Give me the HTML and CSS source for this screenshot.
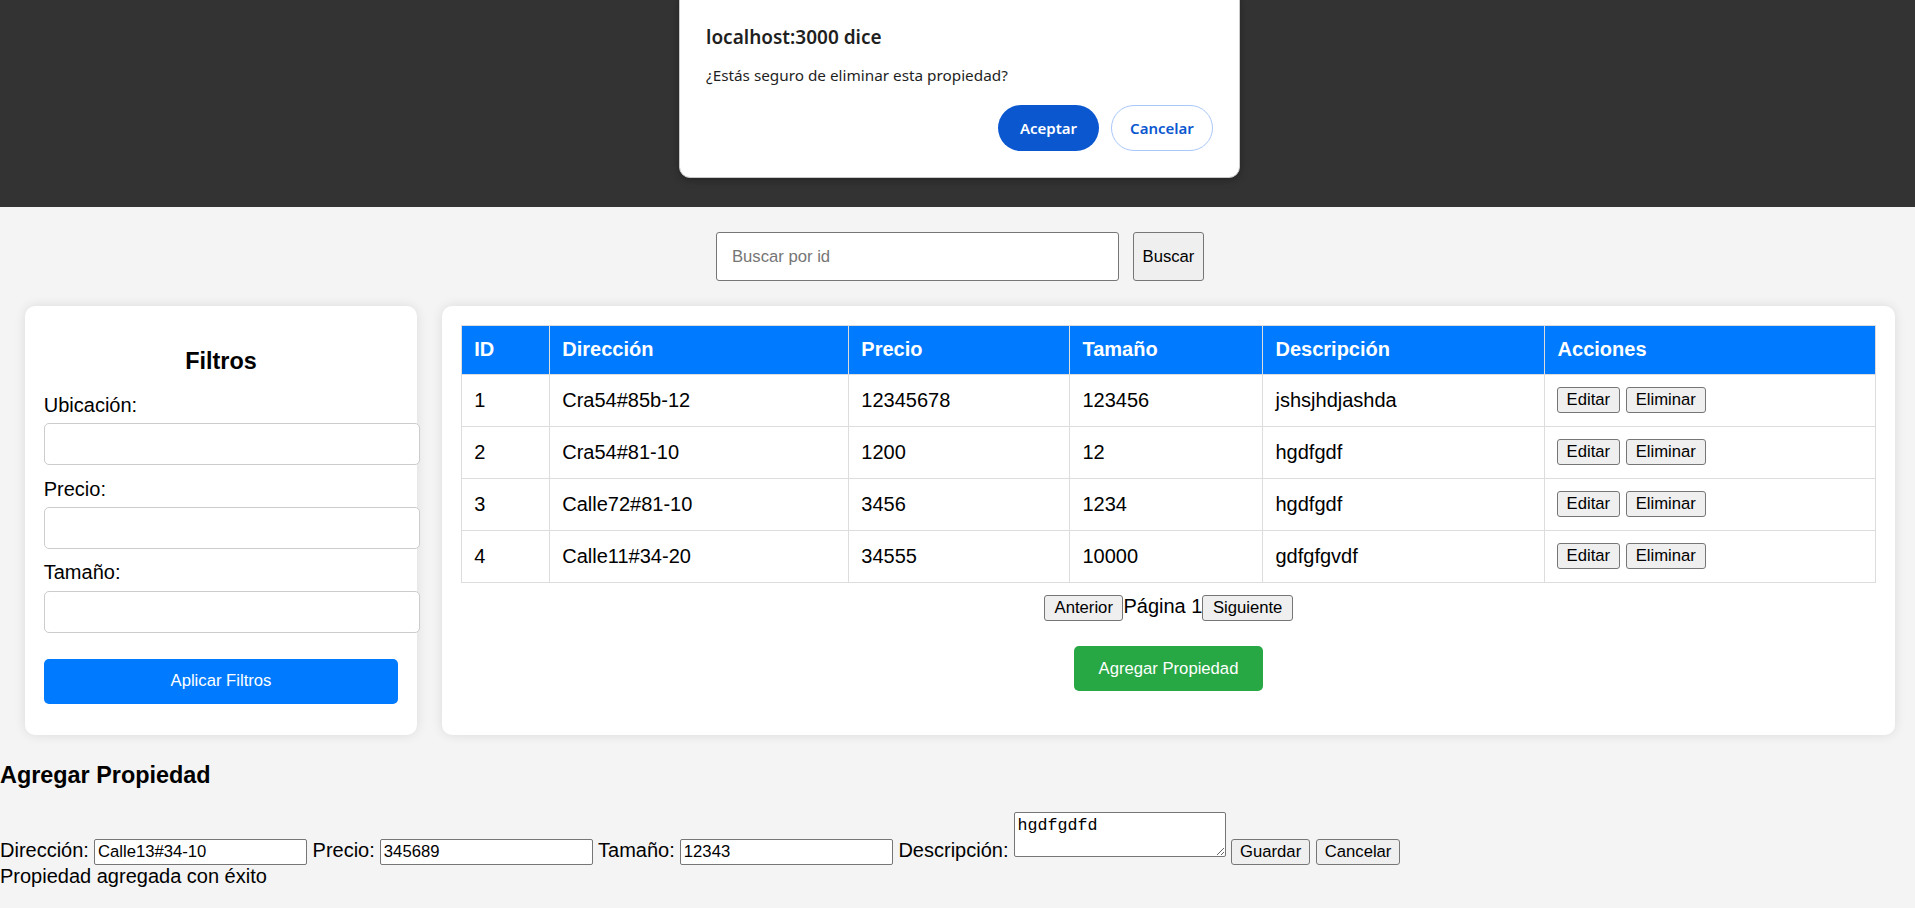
FILE: index.html
```html
<!DOCTYPE html>
<html lang="es">
<head>
<meta charset="utf-8">
<title>Propiedades</title>
<link rel="stylesheet" href="styles.css">
</head>
<body>
<header class="topbar"></header>

<div class="search">
  <input class="search-input" type="text" placeholder="Buscar por id">
  <button class="btn-native search-btn">Buscar</button>
</div>

<div class="main">
  <aside class="card filters">
    <h3 class="filters-title">Filtros</h3>
    <label class="f-label">Ubicación:</label>
    <input class="f-input" type="text">
    <label class="f-label">Precio:</label>
    <input class="f-input" type="text">
    <label class="f-label">Tamaño:</label>
    <input class="f-input" type="text">
    <button class="apply-btn">Aplicar Filtros</button>
  </aside>

  <section class="card table-card">
    <table class="props">
      <colgroup>
        <col class="c-id"><col class="c-dir"><col class="c-precio"><col class="c-tam"><col class="c-desc"><col class="c-acc">
      </colgroup>
      <thead>
        <tr><th>ID</th><th>Dirección</th><th>Precio</th><th>Tamaño</th><th>Descripción</th><th>Acciones</th></tr>
      </thead>
      <tbody>
        <tr><td>1</td><td>Cra54#85b-12</td><td>12345678</td><td>123456</td><td>jshsjhdjashda</td><td><button class="btn-native">Editar</button> <button class="btn-native">Eliminar</button></td></tr>
        <tr><td>2</td><td>Cra54#81-10</td><td>1200</td><td>12</td><td>hgdfgdf</td><td><button class="btn-native">Editar</button> <button class="btn-native">Eliminar</button></td></tr>
        <tr><td>3</td><td>Calle72#81-10</td><td>3456</td><td>1234</td><td>hgdfgdf</td><td><button class="btn-native">Editar</button> <button class="btn-native">Eliminar</button></td></tr>
        <tr><td>4</td><td>Calle11#34-20</td><td>34555</td><td>10000</td><td>gdfgfgvdf</td><td><button class="btn-native">Editar</button> <button class="btn-native">Eliminar</button></td></tr>
      </tbody>
    </table>
    <div class="pager"><button class="btn-native">Anterior</button><span>Página 1</span><button class="btn-native">Siguiente</button></div>
    <button class="add-btn">Agregar Propiedad</button>
  </section>
</div>

<section class="add-form">
  <h3 class="add-title">Agregar Propiedad</h3>
  <form class="form-line"><label>Dirección:</label> <input class="line-input" type="text" value="Calle13#34-10"> <label>Precio:</label> <input class="line-input" type="text" value="345689"> <label>Tamaño:</label> <input class="line-input" type="text" value="12343"> <label>Descripción:</label> <textarea class="line-area">hgdfgdfd</textarea> <button type="button" class="btn-native btn-form">Guardar</button> <button type="button" class="btn-native btn-form">Cancelar</button></form>
  <div class="msg">Propiedad agregada con éxito</div>
</section>

<div class="dialog">
  <div class="dialog-title">localhost:3000 dice</div>
  <div class="dialog-msg">¿Estás seguro de eliminar esta propiedad?</div>
  <div class="dialog-actions">
    <button class="dlg-btn dlg-ok">Aceptar</button>
    <button class="dlg-btn dlg-cancel">Cancelar</button>
  </div>
</div>
</body>
</html>
```

FILE: styles.css
```css
body {
  margin: 0;
  background: #f4f4f4;
  font-family: "Liberation Sans", Arial, sans-serif;
  font-size: 20px;
  color: #000;
}

.topbar {
  height: 207px;
  background: #333333;
}

.btn-native {
  font-family: "Liberation Sans", Arial, sans-serif;
  font-size: 16.67px;
  color: #000;
  background: #efefef;
  border: 1px solid #767676;
  border-radius: 3px;
  padding: 2px 9px;
  margin: 0;
}
.btn-form {
  padding: 2px 8px;
}

/* search */
.search {
  display: flex;
  justify-content: center;
  gap: 14px;
  margin-top: 25px;
  padding-left: 5px;
}
.search-input {
  width: 403px;
  height: 49px;
  box-sizing: border-box;
  padding: 0 15px;
  border: 1px solid #767676;
  border-radius: 3px;
  font-family: "Liberation Sans", Arial, sans-serif;
  font-size: 16.67px;
  background: #fff;
}
.search-input::placeholder { color: #757575; }
.search-btn {
  width: 71px;
  padding: 0;
}

/* main */
.main {
  display: flex;
  gap: 25px;
  padding: 25px 20px 0 25px;
  align-items: stretch;
}
.card {
  background: #fff;
  border-radius: 10px;
  box-shadow: 0 0 12px rgba(0, 0, 0, 0.1);
  padding: 18.75px;
  box-sizing: border-box;
}
.filters {
  width: 392px;
  flex: none;
}
.table-card {
  flex: 1;
  min-width: 0;
}

.filters-title {
  font-size: 23.4px;
  text-align: center;
  margin: 23.4px 0 18.75px;
}
.f-label {
  display: block;
  margin-bottom: 6.25px;
}
.f-input {
  display: block;
  width: 100%;
  padding: 10px;
  border: 1px solid #ccc;
  border-radius: 5px;
  margin: 0 0 12.5px;
  font-family: "Liberation Sans", Arial, sans-serif;
  font-size: 16.67px;
  background: #fff;
}
.apply-btn {
  display: block;
  width: 100%;
  margin-top: 26px;
  padding: 12.5px;
  background: #007bff;
  color: #fff;
  border: none;
  border-radius: 5px;
  font-family: "Liberation Sans", Arial, sans-serif;
  font-size: 16.67px;
}

/* table */
.props {
  width: 100%;
  border-collapse: collapse;
  table-layout: fixed;
}
.props th,
.props td {
  border: 1px solid #ddd;
  padding: 12.5px;
  text-align: left;
}
.props td:last-child {
  padding-left: 11.5px;
}
.props th {
  background: #007bff;
  color: #fff;
  font-weight: bold;
}
.c-id { width: 88px; }
.c-dir { width: 299px; }
.c-precio { width: 221px; }
.c-tam { width: 193px; }
.c-desc { width: 282px; }
.c-acc { width: 331px; }

.pager {
  text-align: center;
  margin-top: 12.5px;
}
.pager .btn-native {
  padding: 2px 9.5px;
}
.add-btn {
  display: block;
  margin: 25px auto;
  padding: 12.5px 25px;
  background: #28a745;
  color: #fff;
  border: none;
  border-radius: 5px;
  font-family: "Liberation Sans", Arial, sans-serif;
  font-size: 16.67px;
}

/* add form */
.add-title {
  font-size: 23.4px;
  margin: 27px 0 23.4px;
}
.form-line { margin: 0; }
.line-input {
  width: 212.5px;
  height: 26px;
  box-sizing: border-box;
  padding: 1px 2.5px;
  border: 1px solid #767676;
  border-radius: 2px;
  font-family: "Liberation Sans", Arial, sans-serif;
  font-size: 16.67px;
  background: #fff;
}
.line-area {
  width: 211.5px;
  height: 45px;
  box-sizing: border-box;
  padding: 2.5px;
  border: 1px solid #767676;
  border-radius: 2px;
  font-family: "Liberation Mono", "DejaVu Sans Mono", monospace;
  font-size: 16.67px;
  background: #fff;
  resize: both;
}

/* alert dialog */
.dialog {
  position: absolute;
  left: 679px;
  top: -12px;
  width: 561px;
  height: 190px;
  box-sizing: border-box;
  padding: 35.6px 26px 0 26px;
  background: #fff;
  border: 1px solid #c9c9c9;
  border-radius: 11px;
  box-shadow: 0 2px 8px rgba(0, 0, 0, 0.3);
  font-family: "Noto Sans", "Open Sans", sans-serif;
  color: #1f1f1f;
}
.dialog-title {
  font-size: 19px;
  font-weight: 600;
  line-height: 24px;
}
.dialog-msg {
  font-size: 15.3px;
  line-height: 20px;
  margin-top: 16.4px;
}
.dialog-actions {
  display: flex;
  justify-content: flex-end;
  gap: 12px;
  margin-top: 20px;
}
.dlg-btn {
  height: 46px;
  border-radius: 23px;
  font-family: "Noto Sans", "Open Sans", sans-serif;
  font-size: 15px;
  font-weight: 600;
  box-sizing: border-box;
}
.dlg-ok {
  width: 101px;
  background: #0b57d0;
  color: #fff;
  border: none;
}
.dlg-cancel {
  width: 102px;
  background: #fff;
  color: #0b57d0;
  border: 1px solid #a8c7fa;
}
```
